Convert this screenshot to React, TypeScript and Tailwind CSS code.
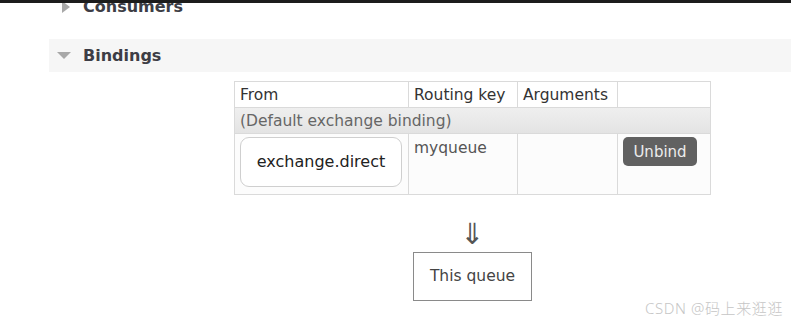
import React from "react";

export default function App() {
  const font = { fontFamily: '"DejaVu Sans", Verdana, sans-serif' };
  return (
    <div className="relative w-[791px] h-[322px] overflow-hidden bg-white" style={font}>
      <div className="absolute left-0 top-0 w-full h-[3px] bg-[#1c1c1c] z-10" />
      <div className="-mt-[3px] flex items-center h-[20px] pl-[61px]">
        <svg width="10" height="12" viewBox="0 0 10 12" className="mr-[12px]">
          <polygon points="1,0 9,6 1,12" fill="#a8a8a8" />
        </svg>
        <span className="text-[16px] leading-[20px] font-bold text-[#3d3d45]">Consumers</span>
      </div>
      <div className="mt-[22px] ml-[49px] h-[33px] bg-[#f6f6f6] flex items-center pl-[8px]">
        <svg width="14" height="8" viewBox="0 0 14 8" className="mr-[12px] mt-[1px]">
          <polygon points="0,0 14,0 7,7" fill="#a8a8a8" />
        </svg>
        <span className="text-[16px] leading-[20px] font-bold text-[#3d3d45] mt-[1px]">Bindings</span>
      </div>
      <div className="ml-[234px] w-[477px] mt-[9px] flex flex-col items-center">
        <table className="w-[477px] border-collapse border border-[#dadada] text-[15.5px] leading-[18px]">
          <tbody>
            <tr className="h-[26px] bg-white text-[#333]">
              <td className="w-[174px] border border-[#dadada] px-[5px] pt-[3px] pb-[2px]">From</td>
              <td className="w-[109px] border border-[#dadada] px-[5px] pt-[3px] pb-[2px]">Routing key</td>
              <td className="w-[100px] border border-[#dadada] px-[5px] pt-[3px] pb-[2px]">Arguments</td>
              <td className="border border-[#dadada] px-[5px] pt-[3px] pb-[2px]"></td>
            </tr>
            <tr className="h-[26px] bg-gradient-to-b from-[#efefef] to-[#e3e3e3]">
              <td colSpan={4} className="border border-[#dadada] px-[5px] pt-[3px] pb-[2px] text-[#666]">
                (Default exchange binding)
              </td>
            </tr>
            <tr className="h-[61px] bg-[#fcfcfc] align-top">
              <td className="border border-[#dadada] px-[5px] pt-[3px] pb-[6px]">
                <div className="w-[162px] h-[50px] rounded-[9px] border border-[#cfcfcf] bg-white flex items-center justify-center text-[16px] text-[#222]">
                  exchange.direct
                </div>
              </td>
              <td className="border border-[#dadada] px-[5px] pt-[5px] text-[#555]">myqueue</td>
              <td className="border border-[#dadada]"></td>
              <td className="border border-[#dadada] px-[5px] pt-[3px]">
                <div className="w-[74px] h-[29px] rounded-[5px] bg-[#616161] text-[#ececec] text-[15px] flex items-center justify-center">
                  Unbind
                </div>
              </td>
            </tr>
          </tbody>
        </table>
        <div className="mt-[24px] text-[29px] leading-[30px] text-[#555]">⇓</div>
        <div className="mt-[3px] w-[119px] h-[49px] border-[1.5px] border-[#8a8a8a] flex items-center justify-center text-[15.5px] text-[#444]">
          This queue
        </div>
      </div>
      <div
        className="absolute right-[8px] bottom-[5px] text-[15px] leading-[18px] font-light tracking-[0.6px] text-[#c6c6c6]"
        style={{ fontFamily: '"Noto Sans", "Noto Sans CJK SC", sans-serif' }}
      >
        CSDN @码上来逛逛
      </div>
    </div>
  );
}
